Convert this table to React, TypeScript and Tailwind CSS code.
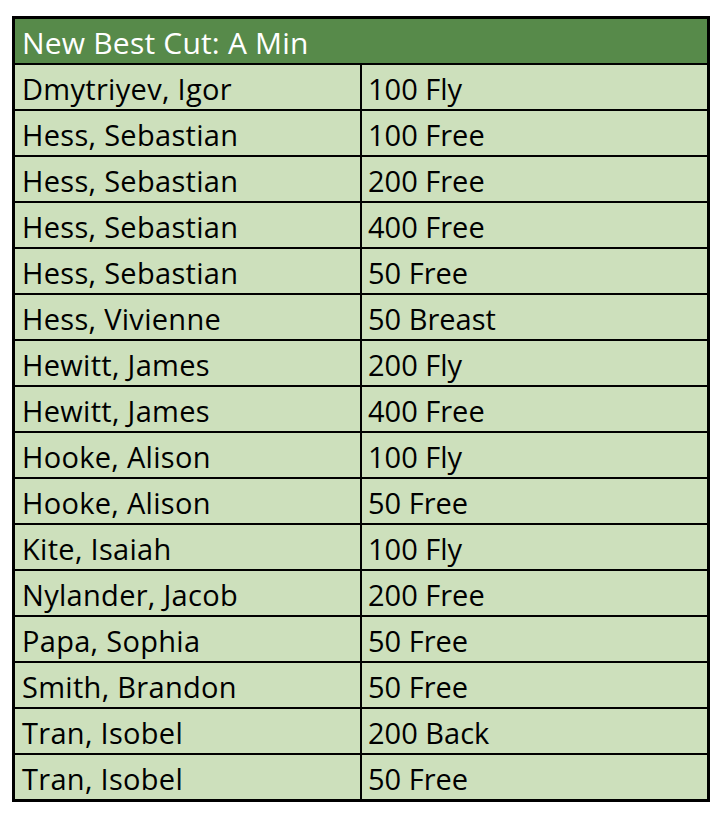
const rows: [string, string][] = [
  ["Dmytriyev, Igor", "100 Fly"],
  ["Hess, Sebastian", "100 Free"],
  ["Hess, Sebastian", "200 Free"],
  ["Hess, Sebastian", "400 Free"],
  ["Hess, Sebastian", "50 Free"],
  ["Hess, Vivienne", "50 Breast"],
  ["Hewitt, James", "200 Fly"],
  ["Hewitt, James", "400 Free"],
  ["Hooke, Alison", "100 Fly"],
  ["Hooke, Alison", "50 Free"],
  ["Kite, Isaiah", "100 Fly"],
  ["Nylander, Jacob", "200 Free"],
  ["Papa, Sophia", "50 Free"],
  ["Smith, Brandon", "50 Free"],
  ["Tran, Isobel", "200 Back"],
  ["Tran, Isobel", "50 Free"],
];

export default function App() {
  return (
    <div className="min-h-screen bg-white pt-[16px] pl-[12px] font-['Open_Sans',sans-serif] text-[29px] leading-[44px]">
      <div className="w-[698px] border-[3px] border-black">
        {/* Header */}
        <div className="h-[44px] bg-[#578a4a] px-[7px] pt-[2px] text-[30px] tracking-[0.2px] text-white">
          New Best Cut: A Min
        </div>

        {rows.map(([name, event], i) => (
          <div key={i} className="flex h-[46px] border-t-2 border-black bg-[#cde0bc] text-black">
            <div className="w-[347px] border-r-2 border-black px-[7px] pt-[2px] tracking-[0.3px]">{name}</div>
            <div className="flex-1 px-[6px] pt-[2px]">{event}</div>
          </div>
        ))}
      </div>
    </div>
  );
}
